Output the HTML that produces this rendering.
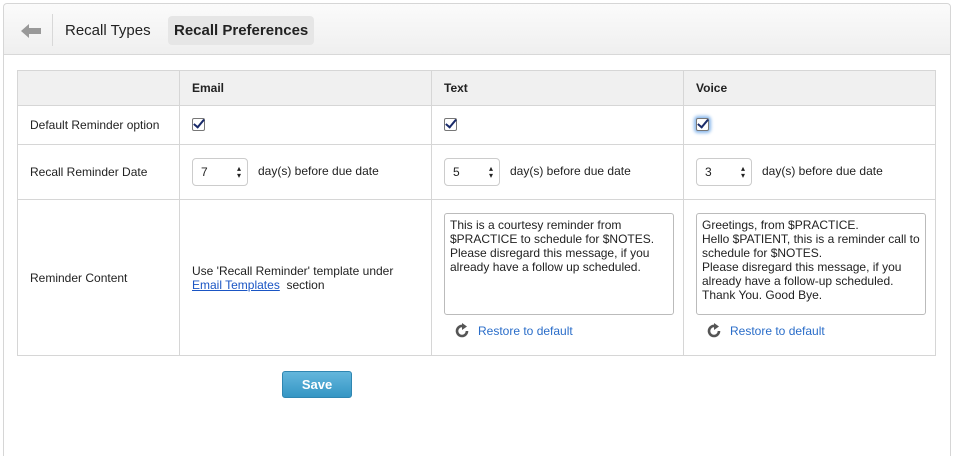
<!DOCTYPE html>
<html style="overflow:hidden;height:456px"><head><style>
body{margin:0;background:#fff;font-family:"Liberation Sans",Arial,sans-serif;font-size:12px;color:#222;width:955px;height:456px;overflow:hidden;position:relative}
.panel{position:absolute;left:3px;top:3px;width:946px;height:460px;border:1px solid #d6d6d6;border-bottom:none;border-radius:4px 4px 0 0;background:#fff}
.hdr{height:50px;border-bottom:1px solid #d8d8d8;background:linear-gradient(#fbfbfb,#efefef);border-radius:4px 4px 0 0;position:relative}
.back{position:absolute;left:13px;top:10px;width:35px;height:32px;border-right:1px solid #d8d8d8}
.tab{position:absolute;top:12px;height:29px;line-height:29px;font-size:15px;padding:0 6px;color:#222}
table{position:absolute;left:17px;top:70px;border-collapse:collapse;width:918px;table-layout:fixed}
td,th{border:1px solid #d6d6d6;text-align:left;vertical-align:middle;padding:0 12px}
th{background:#f0f0f0;height:34px;font-weight:bold}
.sel{display:inline-block;width:56px;height:28px;border:1px solid #ccc;border-radius:4px;box-sizing:border-box;padding-left:8px;line-height:27px;position:relative;vertical-align:middle;background:#fff}
.sel:after{content:"▴\A▾";white-space:pre;position:absolute;right:6px;top:6px;font-size:8px;line-height:7px}
.cb{display:inline-block;width:11px;height:11px;border:1px solid #777;background:#fff;position:relative;border-radius:2px;top:1px}
.cb:after{content:"";position:absolute;left:3px;top:-2px;width:4px;height:9px;border:solid #1a2b6a;border-width:0 2.5px 2.5px 0;transform:rotate(40deg)}
textarea{width:230px;height:102px;border:1px solid #bbb;border-radius:3px;font-family:inherit;font-size:12px;padding:4px 5px;box-sizing:border-box;resize:none;display:block;color:#222;line-height:14px;margin-top:-3px}
.rs{color:#2a6dc9;margin:8px 0 0 10px;display:flex;align-items:center;gap:8px}
a{color:#1a55c4}
.save{position:absolute;left:282px;top:371px;width:70px;height:27px;border-radius:3px;background:linear-gradient(#63b6dc,#3596c4);border:1px solid #2f86b1;box-sizing:border-box;color:#fff;font-weight:bold;font-size:13px;text-align:center;line-height:25px}
</style></head><body>
<div class="panel">
<div class="hdr">
<div class="back"><svg width="22" height="14" viewBox="0 0 22 14" style="margin:10px 0 0 4px"><path d="M0 7 L8 0 L8 4 L20 4 L20 10 L8 10 L8 14Z" fill="#999"/></svg></div>
<div class="tab" style="left:55px">Recall Types</div>
<div class="tab" style="left:164px;background:#e6e6e6;border-radius:4px;font-weight:bold">Recall Preferences</div>
</div>
</div>
<table>
<colgroup><col style="width:162px"><col style="width:252px"><col style="width:252px"><col style="width:252px"></colgroup>
<tr><th></th><th>Email</th><th>Text</th><th>Voice</th></tr>
<tr style="height:39px"><td>Default Reminder option</td><td><span class="cb"></span></td><td><span class="cb"></span></td><td><span class="cb" style="box-shadow:0 0 3px 2px #8ab8ec"></span></td></tr>
<tr style="height:55px"><td>Recall Reminder Date</td>
<td><span class="sel">7</span>&nbsp;&nbsp;&nbsp;day(s) before due date</td>
<td><span class="sel">5</span>&nbsp;&nbsp;&nbsp;day(s) before due date</td>
<td><span class="sel">3</span>&nbsp;&nbsp;&nbsp;day(s) before due date</td></tr>
<tr style="height:156px"><td>Reminder Content</td>
<td>Use 'Recall Reminder' template under<br><a href="#">Email Templates</a>&nbsp; section</td>
<td><textarea>This is a courtesy reminder from $PRACTICE to schedule for $NOTES. Please disregard this message, if you already have a follow up scheduled.</textarea><div class="rs"><svg width="16" height="16" viewBox="0 0 16 16"><path d="M13 8A5 5 0 1 1 9 3.1" fill="none" stroke="#555" stroke-width="2.6"/><path d="M8 0L13 3.5L8 7Z" fill="#555"/></svg>Restore to default</div></td>
<td><textarea>Greetings, from $PRACTICE.
Hello $PATIENT, this is a reminder call to schedule for $NOTES.
Please disregard this message, if you already have a follow-up scheduled.
Thank You. Good Bye.</textarea><div class="rs"><svg width="16" height="16" viewBox="0 0 16 16"><path d="M13 8A5 5 0 1 1 9 3.1" fill="none" stroke="#555" stroke-width="2.6"/><path d="M8 0L13 3.5L8 7Z" fill="#555"/></svg>Restore to default</div></td></tr>
</table>
<div class="save">Save</div>
</body></html>
